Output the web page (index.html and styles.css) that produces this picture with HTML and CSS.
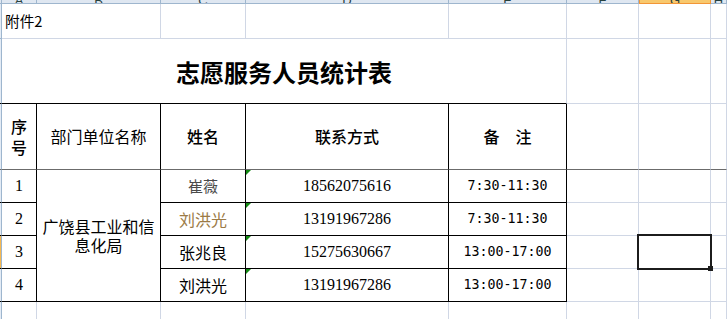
FILE: index.html
```html
<!DOCTYPE html>
<html lang="zh-CN">
<head>
<meta charset="utf-8">
<title>志愿服务人员统计表</title>
<link rel="stylesheet" href="styles.css">
</head>
<body>
<div class="sheet">
  <!-- column header band -->
  <div class="c corner"></div>
  <div class="c ch"><span>A</span></div>
  <div class="c ch"><span>B</span></div>
  <div class="c ch"><span>C</span></div>
  <div class="c ch"><span>D</span></div>
  <div class="c ch"><span>E</span></div>
  <div class="c ch"><span>F</span></div>
  <div class="c ch ch-sel"><span>G</span></div>
  <div class="c ch"><span>H</span></div>

  <!-- row 1 -->
  <div class="c rh"></div>
  <div class="c note">附件2</div>
  <div class="c"></div>
  <div class="c"></div>
  <div class="c"></div>
  <div class="c"></div>
  <div class="c"></div>
  <div class="c"></div>

  <!-- row 2 -->
  <div class="c rh rh-black"></div>
  <div class="c title">志愿服务人员统计表</div>
  <div class="c"></div>
  <div class="c"></div>
  <div class="c"></div>

  <!-- row 3: table header -->
  <div class="c rh frz"></div>
  <div class="c t frz hd hd-two">序<br>号</div>
  <div class="c t frz hd hd-light">部门单位名称</div>
  <div class="c t frz hd">姓名</div>
  <div class="c t frz hd">联系方式</div>
  <div class="c t frz hd">备　注</div>
  <div class="c frz"></div>
  <div class="c frz"></div>
  <div class="c frz"></div>

  <!-- row 4 -->
  <div class="c rh rh-black"></div>
  <div class="c t num">1</div>
  <div class="c t dept">广饶县工业和信<br>息化局</div>
  <div class="c t name name-gray">崔薇</div>
  <div class="c t phone tri">18562075616</div>
  <div class="c t time">7:30-11:30</div>
  <div class="c"></div>
  <div class="c"></div>
  <div class="c"></div>

  <!-- row 5 -->
  <div class="c rh rh-black"></div>
  <div class="c t num">2</div>
  <div class="c t name name-gold">刘洪光</div>
  <div class="c t phone tri">13191967286</div>
  <div class="c t time">7:30-11:30</div>
  <div class="c"></div>
  <div class="c"></div>
  <div class="c"></div>

  <!-- row 6 -->
  <div class="c rh rh-black rh-sel"></div>
  <div class="c t num">3</div>
  <div class="c t name">张兆良</div>
  <div class="c t phone tri">15275630667</div>
  <div class="c t time">13:00-17:00</div>
  <div class="c"></div>
  <div class="c"></div>
  <div class="c"></div>

  <!-- row 7 -->
  <div class="c rh rh-black"></div>
  <div class="c t num">4</div>
  <div class="c t name">刘洪光</div>
  <div class="c t phone tri">13191967286</div>
  <div class="c t time">13:00-17:00</div>
  <div class="c"></div>
  <div class="c"></div>
  <div class="c"></div>

  <!-- row 8 -->
  <div class="c rh"></div>
  <div class="c"></div>
  <div class="c"></div>
  <div class="c"></div>
  <div class="c"></div>
  <div class="c"></div>
  <div class="c"></div>
  <div class="c"></div>
  <div class="c"></div>

  <div class="selection"><div class="handle"></div></div>
</div>
</body>
</html>
```

FILE: styles.css
```css
html, body {
  margin: 0;
  padding: 0;
  background: #fff;
  overflow: hidden;
}

.sheet {
  position: relative;
  display: grid;
  grid-template-columns: 2px 35px 124px 85px 203px 118px 72px 72px 1fr;
  grid-template-rows: 4px 35px 65px 66px 33px 33px 33px 33px 33px;
  width: 727px;
  height: 319px;
  overflow: hidden;
  font-family: "Noto Sans CJK SC", "Noto Sans", sans-serif;
  color: #000;
}

.c {
  box-sizing: border-box;
  border-right: 1px solid #d0d7e5;
  border-bottom: 1px solid #d0d7e5;
  display: flex;
  align-items: center;
  justify-content: center;
  text-align: center;
  min-width: 0;
  background: #fff;
}

/* column header band */
.corner,
.ch {
  background: #dfe7f1;
  border-right-color: #9eb6ce;
  border-bottom-color: #9eb6ce;
}
.ch {
  overflow: hidden;
  align-items: flex-end;
}
.ch span {
  font-family: "Liberation Sans", sans-serif;
  font-size: 13px;
  line-height: 13px;
  color: #27413e;
  margin-bottom: -4px;
}
.ch-sel {
  background: #f8c86d;
  border-right-color: #f29536;
  border-bottom-color: #f29536;
  border-left: 1px solid #f29536;
}

/* row header strip */
.rh {
  background: #e3ebf5;
  border-right-color: #9eb6ce;
  border-bottom-color: #9eb6ce;
}
.rh-black { border-bottom-color: #000; }
.rh-sel { background: #f6b850; }

/* row 1: text overflows column A into B */
.note {
  grid-column: span 2;
  justify-content: flex-start;
  padding-left: 3px;
  white-space: nowrap;
  font-size: 14.67px;
  line-height: 18px;
}

/* row 2 title (merged A:E) */
.title {
  grid-column: span 5;
  border-bottom-color: #000;
  font-size: 24px;
  font-weight: 700;
  line-height: 30px;
  padding-top: 1px;
}

/* table cells */
.t {
  border-right-color: #000;
  border-bottom-color: #000;
}
.frz { border-bottom-color: #6b6b6b; }

.hd {
  font-size: 16px;
  font-weight: 500;
  line-height: 21px;
}
.hd-light { font-weight: 400; }
.hd-two { line-height: 21px; padding-top: 1px; }

.num {
  font-family: "Liberation Serif", serif;
  font-size: 16px;
  line-height: 18px;
}

.dept {
  grid-row: span 4;
  font-size: 16px;
  line-height: 19px;
  padding-top: 1px;
}

.name {
  font-size: 16px;
  line-height: 20px;
}
.name-gray {
  color: #4a4a4a;
  font-size: 15px;
}
.name-gold { color: #9b7a45; }

.phone {
  position: relative;
  font-family: "Liberation Serif", serif;
  font-size: 16px;
  line-height: 18px;
}
.tri::before {
  content: "";
  position: absolute;
  left: 0;
  top: 0;
  width: 0;
  height: 0;
  border-top: 5px solid #138a13;
  border-right: 5px solid transparent;
}

.time {
  font-family: "DejaVu Sans Mono", monospace;
  font-size: 13.3px;
  line-height: 16px;
}

/* active cell selection overlay */
.selection {
  position: absolute;
  left: 637px;
  top: 234px;
  width: 75px;
  height: 36px;
  box-sizing: border-box;
  border: 2px solid #1c1c1c;
}
.handle {
  position: absolute;
  right: -3px;
  bottom: -3px;
  width: 5px;
  height: 5px;
  background: #1c1c1c;
}
```
